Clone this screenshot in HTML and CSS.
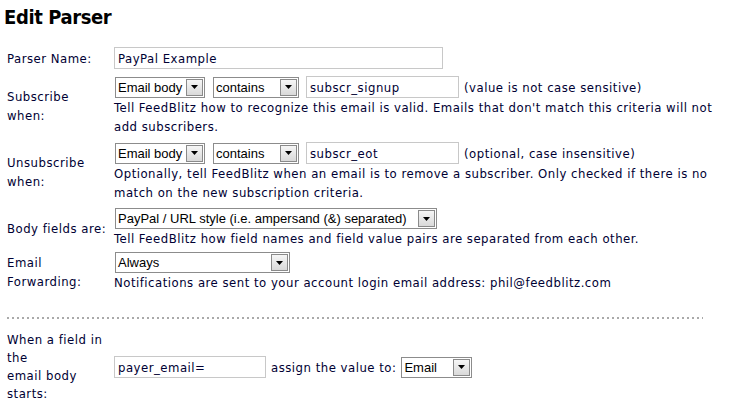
FILE: index.html
```html
<!DOCTYPE html>
<html>
<head>
<meta charset="utf-8">
<title>Edit Parser</title>
<link rel="stylesheet" href="styles.css">
</head>
<body>
<h1 class="title">Edit Parser</h1>
<table class="form">
  <tr class="row-name">
    <td class="lbl">Parser Name:</td>
    <td class="fld"><input class="text w-name" type="text" value="PayPal Example"></td>
  </tr>
  <tr>
    <td class="lbl">Subscribe when:</td>
    <td class="fld">
      <div class="ctrls">
        <span class="select w-body"><span class="sel-val">Email body</span><span class="sel-btn"><svg width="7" height="4" viewBox="0 0 7 4"><path d="M0 0H7L3.5 4Z"/></svg></span></span>
        <span class="select w-op"><span class="sel-val">contains</span><span class="sel-btn"><svg width="7" height="4" viewBox="0 0 7 4"><path d="M0 0H7L3.5 4Z"/></svg></span></span>
        <input class="text w-val" type="text" value="subscr_signup">
        <span class="note">(value is not case sensitive)</span>
      </div>
      <div class="desc">Tell FeedBlitz how to recognize this email is valid. Emails that don't match this criteria will not add subscribers.</div>
    </td>
  </tr>
  <tr>
    <td class="lbl">Unsubscribe when:</td>
    <td class="fld">
      <div class="ctrls">
        <span class="select w-body"><span class="sel-val">Email body</span><span class="sel-btn"><svg width="7" height="4" viewBox="0 0 7 4"><path d="M0 0H7L3.5 4Z"/></svg></span></span>
        <span class="select w-op"><span class="sel-val">contains</span><span class="sel-btn"><svg width="7" height="4" viewBox="0 0 7 4"><path d="M0 0H7L3.5 4Z"/></svg></span></span>
        <input class="text w-val" type="text" value="subscr_eot">
        <span class="note">(optional, case insensitive)</span>
      </div>
      <div class="desc">Optionally, tell FeedBlitz when an email is to remove a subscriber. Only checked if there is no match on the new subscription criteria.</div>
    </td>
  </tr>
  <tr>
    <td class="lbl">Body fields are:</td>
    <td class="fld">
      <div class="ctrls">
        <span class="select w-style"><span class="sel-val">PayPal / URL style (i.e. ampersand (&amp;) separated)</span><span class="sel-btn"><svg width="7" height="4" viewBox="0 0 7 4"><path d="M0 0H7L3.5 4Z"/></svg></span></span>
      </div>
      <div class="desc">Tell FeedBlitz how field names and field value pairs are separated from each other.</div>
    </td>
  </tr>
  <tr class="row-fwd">
    <td class="lbl">Email Forwarding:</td>
    <td class="fld">
      <div class="ctrls">
        <span class="select w-fwd"><span class="sel-val">Always</span><span class="sel-btn"><svg width="7" height="4" viewBox="0 0 7 4"><path d="M0 0H7L3.5 4Z"/></svg></span></span>
      </div>
      <div class="desc">Notifications are sent to your account login email address: phil@feedblitz.com</div>
    </td>
  </tr>
  <tr>
    <td class="sep" colspan="2"><div class="sep-line"></div></td>
  </tr>
  <tr>
    <td class="lbl lbl-tight">When a field in the<br>email body starts:</td>
    <td class="fld">
      <div class="ctrls">
        <input class="text w-field" type="text" value="payer_email=">
        <span class="assign">assign the value to:</span>
        <span class="select w-target"><span class="sel-val">Email</span><span class="sel-btn"><svg width="7" height="4" viewBox="0 0 7 4"><path d="M0 0H7L3.5 4Z"/></svg></span></span>
      </div>
    </td>
  </tr>
</table>
</body>
</html>
```

FILE: styles.css
```css
body {
  margin: 0;
  background: #fff;
  color: #000033;
  font-family: "DejaVu Sans Condensed", "DejaVu Sans", sans-serif;
  font-size: 13px;
  letter-spacing: 0.5px;
}

.title {
  margin: 0;
  padding: 5px 0 0 4px;
  font-size: 20px;
  line-height: 24px;
  font-weight: bold;
  letter-spacing: -0.4px;
  color: #000;
}

.form {
  border-collapse: collapse;
  margin-top: 15px;
  width: 718px;
}

.form td {
  padding: 3px 0;
  vertical-align: middle;
  line-height: 19px;
}

.form .row-name td {
  padding-bottom: 4px;
}

.form .row-fwd td {
  padding-top: 1px;
}

td.lbl {
  width: 102px;
  padding-left: 7px;
  padding-right: 5px;
}

td.lbl-tight {
  line-height: 18px;
}

.ctrls {
  display: flex;
  align-items: center;
  white-space: nowrap;
}

.text {
  box-sizing: border-box;
  height: 22px;
  margin: 0;
  padding: 0 3px;
  border: 1px solid #c8c8c8;
  font-family: "DejaVu Sans Condensed", "DejaVu Sans", sans-serif;
  font-size: 13px;
  letter-spacing: 0.5px;
  color: #000033;
  background: #fff;
}

.w-name { width: 329px; }
.w-val { width: 153px; margin-right: 5px; }
.w-field { width: 152px; margin-right: 5px; }

.select {
  box-sizing: border-box;
  display: inline-flex;
  align-items: center;
  height: 21px;
  margin-left: 1px;
  border: 1px solid #8c8c8c;
  background: #fff;
  font-family: "Liberation Sans", Arial, sans-serif;
  font-size: 13px;
  letter-spacing: 0;
  color: #000;
}

.sel-val {
  flex: 1;
  padding-left: 2px;
  overflow: hidden;
}

.sel-btn {
  box-sizing: border-box;
  display: flex;
  align-items: center;
  justify-content: center;
  width: 17px;
  height: 17px;
  margin-right: 1px;
  border: 1px solid #8a8a8a;
  background: linear-gradient(#f6f6f6, #d9d9d9);
}

.sel-btn svg {
  display: block;
  fill: #000;
}

.w-body { width: 90px; margin-right: 7px; }
.w-op { width: 86px; margin-right: 7px; }
.w-style { width: 322px; }
.w-fwd { width: 175px; }
.w-target { width: 71px; }

.assign {
  margin-right: 4px;
}

td.sep {
  padding: 22px 15px 9px 7px;
}

.sep-line {
  height: 2px;
  background-image: linear-gradient(to right, #aaaaaa 2px, transparent 2px);
  background-size: 5px 2px;
  background-repeat: repeat-x;
}
```
